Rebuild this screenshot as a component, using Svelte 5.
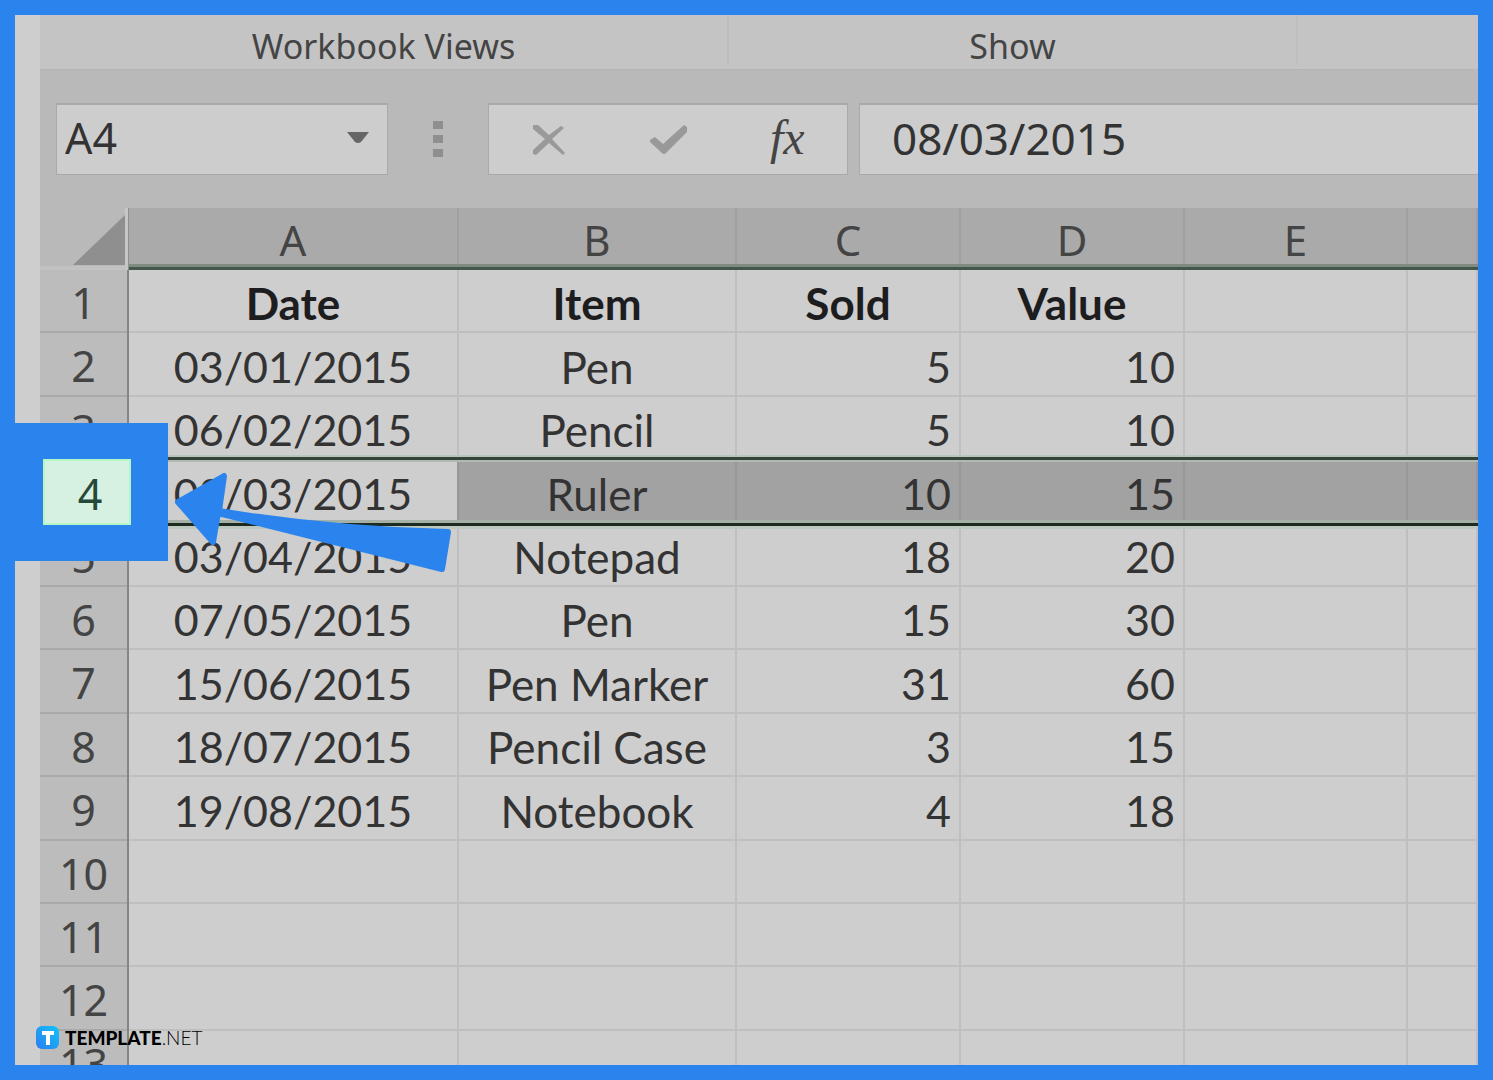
<script>
  const columns = ['A', 'B', 'C', 'D', 'E', ''];
  const selectedRow = 4;

  const rows = [
    ['Date', 'Item', 'Sold', 'Value'],
    ['03/01/2015', 'Pen', '5', '10'],
    ['06/02/2015', 'Pencil', '5', '10'],
    ['08/03/2015', 'Ruler', '10', '15'],
    ['03/04/2015', 'Notepad', '18', '20'],
    ['07/05/2015', 'Pen', '15', '30'],
    ['15/06/2015', 'Pen Marker', '31', '60'],
    ['18/07/2015', 'Pencil Case', '3', '15'],
    ['19/08/2015', 'Notebook', '4', '18'],
    [],
    [],
    [],
    []
  ];

  let cellName = $state('A4');
  let formula = $state('08/03/2015');
</script>

<main class="frame">
  <div class="app">
    <div class="ribbon">
      <div class="group views">Workbook Views</div>
      <div class="group show">Show</div>
      <div class="group rest"></div>
    </div>

    <div class="formula-bar">
      <div class="name-box">
        <input aria-label="Name box" bind:value={cellName} />
        <button class="drop" aria-label="Open name list">
          <svg width="22" height="12" viewBox="0 0 22 12"><path d="M0 0h22L14 10q-3 2-6 0z" fill="#666" /></svg>
        </button>
      </div>
      <svg class="dots" width="10" height="36" viewBox="0 0 10 36" fill="#8f8f8f">
        <rect width="10" height="8" />
        <rect y="14" width="10" height="8" />
        <rect y="28" width="10" height="8" />
      </svg>
      <div class="actions">
        <button aria-label="Cancel">
          <svg width="34" height="32" viewBox="0 0 34 32" fill="#999">
            <path d="M1 1l5 0 11 10L29 2l3 2L20 15l13 14-2 2-14-12L4 31l-3-1v-4l12-11L1 5z" />
          </svg>
        </button>
        <button aria-label="Enter">
          <svg width="38" height="32" viewBox="0 0 38 32" fill="#999">
            <path d="M1 16l5-3 8 7L35 1l3 2v5L17 29q-2 2-4 0L1 18z" />
          </svg>
        </button>
        <button class="fx" aria-label="Insert function">fx</button>
      </div>
      <input class="formula" aria-label="Formula" bind:value={formula} />
    </div>

    <table>
      <colgroup>
        <col class="col-head" />
        <col class="col-a" />
        <col class="col-b" />
        <col class="col-c" />
        <col class="col-c" />
        <col class="col-e" />
        <col />
      </colgroup>
      <thead>
        <tr>
          <th class="corner">
            <button aria-label="Select all">
              <svg width="52" height="50" viewBox="0 0 52 50"><path d="M52 0v50H0z" fill="#8f8f8f" /></svg>
            </button>
          </th>
          {#each columns as column}
            <th scope="col">{column}</th>
          {/each}
        </tr>
      </thead>
      <tbody>
        {#each rows as row, r}
          <tr class:selected={r + 1 === selectedRow} class:titles={r === 0}>
            <th scope="row">
              {#if r + 1 === selectedRow}
                <div class="callout">{r + 1}</div>
                <svg class="arrow" width="278" height="102" viewBox="0 0 278 102" fill="#2b84ee" stroke="#2b84ee" stroke-width="6" stroke-linejoin="round">
                  <path d="M4 30L50 4L45 39Q160 58 274 60L268 97L44 41L39 70Z" />
                </svg>
              {:else}
                {r + 1}
              {/if}
            </th>
            {#each columns as _, c}
              <td class:item={c === 1} class:number={c > 1 && r > 0}>{row[c] ?? ''}</td>
            {/each}
          </tr>
        {/each}
      </tbody>
    </table>
  </div>

  <a class="brand" href="#template">
    <svg width="23" height="23" viewBox="0 0 23 23">
      <defs>
        <linearGradient id="brand-fill" x1="1" y1="0" x2="0" y2="1">
          <stop offset="0" stop-color="#12c3fb" />
          <stop offset="1" stop-color="#2b7df0" />
        </linearGradient>
      </defs>
      <rect width="23" height="23" rx="6" fill="url(#brand-fill)" />
      <path d="M6 5h12v4h-4v10h-4V9H6z" fill="#fff" />
    </svg>
    <span><b>TEMPLATE</b>.NET</span>
  </a>
</main>

<style>
  :global(body) {
    margin: 0;
  }

  .frame {
    position: relative;
    box-sizing: border-box;
    height: 100vh;
    padding-left: 25px;
    border: 15px solid #2b84ee;
    background: #cecece;
    overflow: hidden;
    color: #333;
    font-family: 'Noto Sans', 'Open Sans', sans-serif;
  }

  .app {
    background: #b9b9b9;
  }

  button,
  input {
    padding: 0;
    border: 0;
    background: none;
    color: inherit;
    font: inherit;
    outline: none;
  }

  button {
    display: flex;
    align-items: center;
    justify-content: center;
    cursor: pointer;
  }

  .ribbon {
    display: flex;
    height: 54px;
    background: #c4c4c4;
    border-bottom: 1px solid #b5b5b5;
    font-size: 34px;
    line-height: 62px;
    text-align: center;
    color: #444;
  }

  .group {
    box-sizing: border-box;
    height: 50px;
    border-right: 2px solid #bebebe;
  }

  .views {
    width: 689px;
  }

  .show {
    width: 569px;
  }

  .rest {
    border: 0;
  }

  .formula-bar {
    display: flex;
    align-items: center;
    height: 138px;
    padding-left: 16px;
    font-size: 44px;
  }

  .name-box,
  .actions,
  .formula {
    box-sizing: border-box;
    height: 72px;
    background: #cdcdcd;
    border: 1px solid #a9a9a9;
    border-top-width: 2px;
  }

  .name-box {
    display: flex;
    width: 332px;
    padding-left: 8px;
  }

  .name-box input {
    flex: 1;
    min-width: 0;
    padding-bottom: 4px;
    font-size: 43px;
  }

  .drop {
    width: 58px;
    padding-bottom: 4px;
  }

  .dots {
    margin: 0 45px;
  }

  .actions {
    display: grid;
    grid-template-columns: repeat(3, 1fr);
    width: 360px;
    margin-right: 11px;
  }

  .fx {
    padding-bottom: 4px;
    font: italic 700 48px 'Liberation Serif', serif;
    font-weight: 400;
    color: #444;
  }

  .formula {
    flex: 1;
    min-width: 0;
    padding-bottom: 4px;
    padding-left: 32px;
    border-right: 0;
  }

  table {
    width: 100%;
    table-layout: fixed;
    border-collapse: separate;
    border-spacing: 0;
  }

  .col-head {
    width: 89px;
  }

  .col-a {
    width: 330px;
  }

  .col-b {
    width: 278px;
  }

  .col-c {
    width: 224px;
  }

  .col-e {
    width: 223px;
  }

  th,
  td {
    box-sizing: border-box;
    overflow: hidden;
    white-space: nowrap;
  }

  /* grid lines are inset shadows so the dark rules run unbroken across columns */
  thead th {
    height: 62px;
    padding: 4px 2px 3px 0;
    background: #aaa;
    box-shadow: inset 0 -3px #45564a, inset 0 -6px #7f8a80, inset -2px 0 #a0a0a0;
    font-size: 42px;
    font-weight: 400;
    line-height: 50px;
    color: #444;
  }

  thead .corner {
    padding: 0;
    background: #b9b9b9;
    box-shadow: inset -1px 0 #8f8f8f, inset -4px 0 #c6c6c6, inset 0 -4px #c2c2c2;
    vertical-align: bottom;
  }

  .corner button {
    margin: 0 4px 5px auto;
  }

  tbody tr {
    height: 63px;
  }

  tbody tr:nth-child(5n + 2),
  tbody tr:nth-child(5n + 4) {
    height: 64px;
  }

  tbody th {
    padding: 4px 2px 2px 0;
    background: #bcbcbc;
    box-shadow: inset -2px 0 #858585, inset 0 -2px #a9a9a9;
    font-size: 43px;
    font-weight: 400;
    line-height: 54px;
    color: #444;
  }

  td {
    padding: 5px 10px 2px 8px;
    background: #cecece;
    box-shadow: inset -2px 0 #bfbfbf, inset 0 -2px #bfbfbf;
    font-family: Lato, 'Noto Sans', sans-serif;
    font-size: 43px;
    line-height: 54px;
    text-align: center;
  }

  td.item {
    font-size: 44px;
  }

  td.number {
    text-align: right;
  }

  .titles td {
    font-size: 44px;
    font-weight: 700;
    color: #1d1d1f;
  }

  tr:nth-child(3) td {
    box-shadow: inset 0 -3px #34443a, inset 0 -5px #b9c5bb, inset -2px 0 #bfbfbf;
  }

  .selected td {
    background: #a2a2a2;
    box-shadow: inset 0 -1px #1c2a20, inset 0 -4px #a5b0a6, inset 0 2px #b0bab1, inset -2px 0 #989898;
  }

  .selected td:nth-child(2) {
    background: #cecece;
  }

  .selected + tr td {
    box-shadow: inset 0 2px #1c2a20, inset 0 5px #bdc9bf, inset -2px 0 #bfbfbf, inset 0 -2px #bfbfbf;
  }

  .selected th {
    position: relative;
    overflow: visible;
  }

  .callout {
    position: absolute;
    top: -37px;
    left: -25px;
    z-index: 1;
    width: 88px;
    height: 66px;
    border: 36px solid #2b84ee;
    border-right-width: 37px;
    border-left-width: 28px;
    background: #d6f1e1;
    box-shadow: inset 0 0 0 2px #b5f7c4;
    line-height: 70px;
    text-indent: 6px;
    color: #26483a;
  }

  .arrow {
    position: absolute;
    top: 12px;
    left: 134px;
    z-index: 2;
  }

  .brand {
    position: absolute;
    left: 21px;
    bottom: 16px;
    z-index: 3;
    display: flex;
    align-items: center;
    gap: 6px;
    color: #000;
    font: 300 19px Lato, sans-serif;
    text-decoration: none;
  }

  .brand b {
    font-weight: 900;
  }
</style>
